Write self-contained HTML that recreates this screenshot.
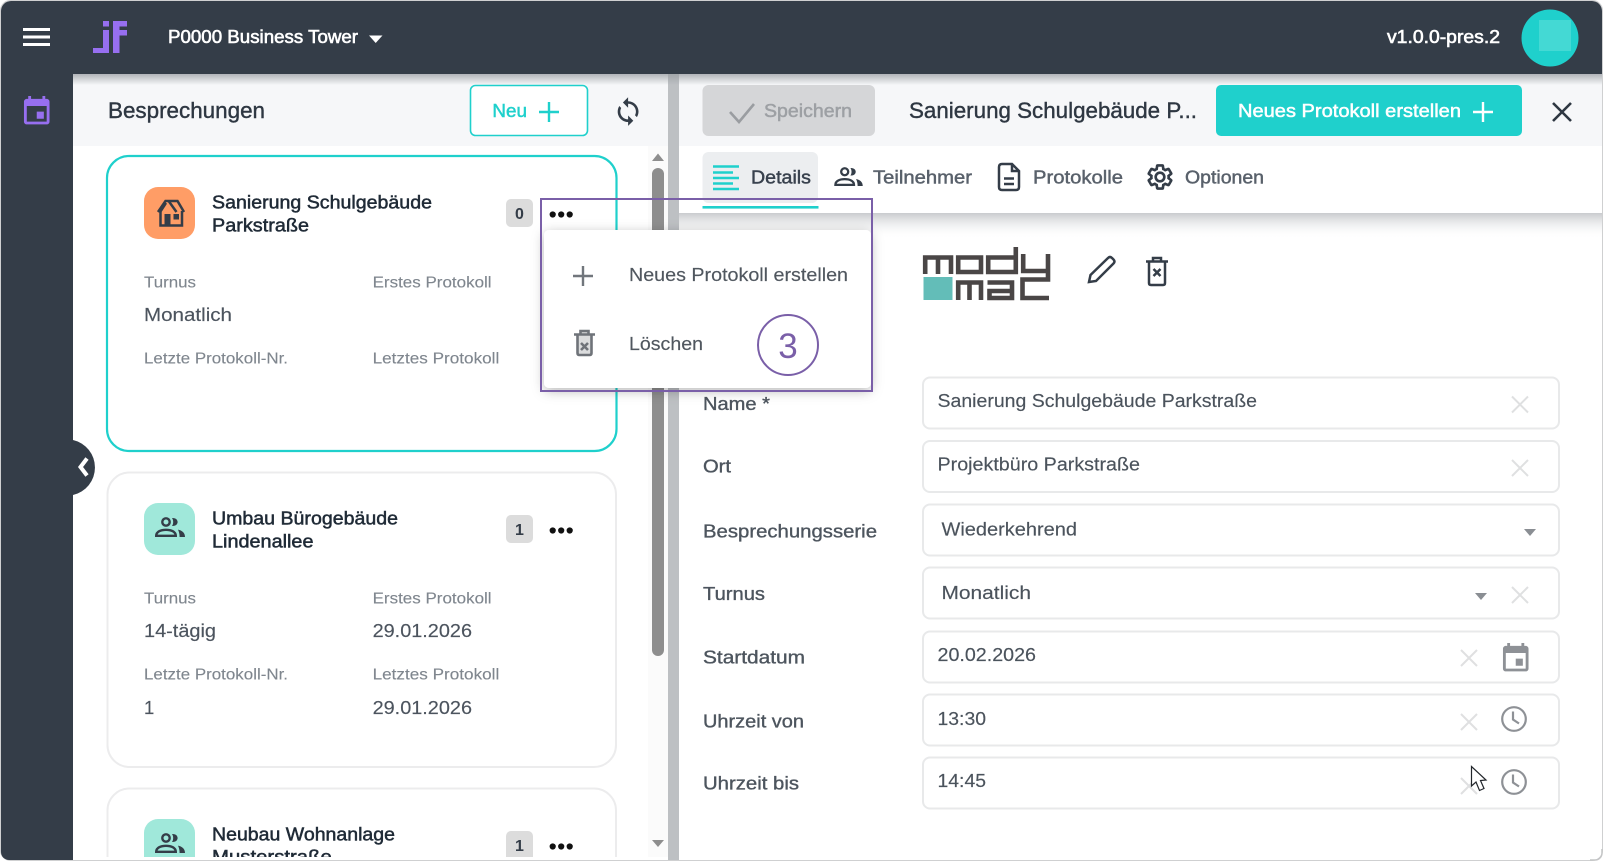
<!DOCTYPE html>
<html lang="de"><head><meta charset="utf-8"><title>Besprechungen</title>
<style>
html,body{margin:0;padding:0;background:#fff;width:1610px;height:862px;overflow:hidden}
body{position:relative}
svg{display:block}
text{font-family:"Liberation Sans",Arial,sans-serif}
.top{font-size:18px;fill:#fff;stroke:#fff;stroke-width:.6px}
.h{font-size:22.5px;fill:#2e3742;stroke:#2e3742;stroke-width:.4px}
.ct{font-size:18.5px;fill:#1f2a36;stroke:#1f2a36;stroke-width:.5px}
.lb{font-size:15.5px;fill:#7f868e;stroke:#7f868e;stroke-width:.12px}
.val{font-size:18.5px;fill:#4c545e;stroke:#4c545e;stroke-width:.15px}
.badge{font-size:16px;font-weight:700;fill:#343d48;text-anchor:middle}
.tab{font-size:18.5px;fill:#59616b;stroke:#59616b;stroke-width:.45px}
.menu{font-size:18.5px;fill:#50575f;stroke:#50575f;stroke-width:.15px}
.fl{font-size:18px;fill:#4d555e;stroke:#4d555e;stroke-width:.35px}
.fv{font-size:18px;fill:#4b535c;stroke:#4b535c;stroke-width:.15px}
.fld{fill:#fff;stroke:#e8e9ea;stroke-width:2}
.x{stroke:#dfe0e1;stroke-width:2;fill:none}
.dark{fill:none;stroke:#343d48;stroke-width:2.5}
.clipline{position:absolute;left:212px;top:848px;width:130px;height:9px;overflow:hidden}
.clipline div{position:absolute;left:0;top:9px;height:0;line-height:0;white-space:nowrap;font:18.5px/0 "Liberation Sans",Arial,sans-serif;color:#1f2a36;-webkit-text-stroke:.5px #1f2a36;transform:scaleX(1.1);transform-origin:left center}
</style></head><body>
<svg width="1610" height="862" viewBox="0 0 1610 862" xmlns="http://www.w3.org/2000/svg">
<defs>
<linearGradient id="sh1" x1="0" y1="0" x2="0" y2="1"><stop offset="0" stop-color="#9a9ea3" stop-opacity=".75"/><stop offset="1" stop-color="#9a9ea3" stop-opacity="0"/></linearGradient>
<linearGradient id="sh2" x1="0" y1="0" x2="0" y2="1"><stop offset="0" stop-color="#c9cbce"/><stop offset="1" stop-color="#fff" stop-opacity="0"/></linearGradient>
<filter id="pop" x="-10%" y="-15%" width="120%" height="130%"><feDropShadow dx="0" dy="3" stdDeviation="6" flood-color="#000" flood-opacity=".28"/></filter>
<symbol id="people" viewBox="0 0 30 20" overflow="visible">
<circle cx="11" cy="5" r="3.7" fill="none" stroke="#343d48" stroke-width="2.4"/>
<path d="M17 1C21 .8 22.6 3 22.6 5C22.6 7 21 9.2 17 9C18.6 7 18.6 3 17 1Z" fill="#343d48"/>
<path d="M1.2 18.8C1.2 14.6 6 12.8 11 12.8C16 12.8 20.8 14.6 20.8 18.8Z" fill="none" stroke="#343d48" stroke-width="2.4"/>
<path d="M23 12.6C27 13.5 30 15.6 30 20H24.6C24.6 17 24 14.8 23 12.6Z" fill="#343d48"/>
</symbol>
<symbol id="house" viewBox="0 0 28 28" overflow="visible">
<path d="M1 13L8.5 2H20.5L27 13M3.5 12V26.5H25V12M12 2.5L19.5 13M3.5 12.5L9 4" fill="none" stroke="#343d48" stroke-width="2.5"/>
<rect x="7.5" y="15" width="6" height="11" fill="#343d48"/><rect x="16.5" y="15" width="5.5" height="5.5" fill="#343d48"/>
</symbol>
</defs>

<!-- frame -->
<rect x=".5" y=".5" width="1602" height="860" rx="10" fill="#fff" stroke="#cfd0d1"/>

<!-- left panel header -->
<rect x="73" y="74" width="595" height="72" fill="#f6f7f9"/>
<!-- right panel header -->
<rect x="679" y="74" width="923" height="72" fill="#f6f7f9"/>
<!-- splitter -->
<rect x="668" y="74" width="11" height="786" fill="#bdc0c3"/>
<rect x="648" y="146" width="20" height="711" fill="#fbfbfb"/>
<!-- tab bar shadow -->
<rect x="679" y="213" width="923" height="26" fill="url(#sh2)"/>

<!-- top bar and sidebar -->
<path d="M1 74V11A10 10 0 0 1 11 1H1592A10 10 0 0 1 1602 11V74Z" fill="#343d48"/>
<path d="M1 74H73V860H9A8 8 0 0 1 1 852Z" fill="#343d48"/>
<rect x="73" y="74" width="1529" height="11" fill="url(#sh1)"/>

<path d="M23 29.5H50M23 37H50M23 44.5H50" stroke="#fff" stroke-width="3"/>
<g fill="#976ff0"><rect x="103" y="21" width="6" height="5.500"/><path d="M103 30H109V53H93V48H103Z"/><path d="M113 53V21H127V26.500H119.500V30H127V35.500H119.500V53Z"/></g>
<text class="top" x="168" y="43" textLength="190" lengthAdjust="spacingAndGlyphs">P0000 Business Tower</text>
<path d="M369 35.500H382.500L375.700 43Z" fill="#fff"/>
<text class="top" x="1387" y="43" textLength="113" lengthAdjust="spacingAndGlyphs">v1.0.0-pres.2</text>
<circle cx="1550" cy="38" r="28.500" fill="#1fd0cc"/><rect x="1539" y="20" width="32" height="31" fill="#44d9d4"/>

<path transform="translate(19.700 94.600) scale(1.42)" fill="#976ff0" d="M17 12h-5v5h5v-5zM16 1v2H8V1H6v2H5c-1.11 0-1.99.9-1.99 2L3 19c0 1.1.89 2 2 2h14c1.1 0 2-.9 2-2V5c0-1.1-.9-2-2-2h-1V1h-2zm3 18H5V8h14v11z"/>

<!-- left header -->
<text class="h" x="108" y="118" textLength="157" lengthAdjust="spacingAndGlyphs">Besprechungen</text>
<rect x="470.500" y="85.500" width="117" height="50" rx="5" fill="#fff" stroke="#1fd0cc" stroke-width="1.600"/>
<text x="492.400" y="117" font-size="18.500" fill="#1fd0cc" stroke="#1fd0cc" stroke-width=".5" textLength="34.600" lengthAdjust="spacingAndGlyphs">Neu</text>
<path d="M539 112H559M549 102V122" stroke="#1fd0cc" stroke-width="2.400"/>
<path transform="translate(612.500 96) scale(1.3)" fill="#343d48" d="M12 4V1L8 5l4 4V6c3.31 0 6 2.69 6 6 0 1.01-.25 1.97-.7 2.8l1.46 1.46C19.54 15.03 20 13.57 20 12c0-4.42-3.58-8-8-8zm0 14c-3.31 0-6-2.69-6-6 0-1.01.25-1.97.7-2.8L5.24 7.74C4.46 8.97 4 10.43 4 12c0 4.42 3.58 8 8 8v3l4-4-4-4v3z"/>

<!-- cards -->
<rect x="107" y="156" width="509.500" height="295" rx="22" fill="#fff" stroke="#1fd0cc" stroke-width="2.200"/>
<rect x="144" y="187" width="51" height="52" rx="14" fill="#ff9d66"/>
<use href="#house" x="157" y="199" width="28" height="28"/>
<text class="ct" x="212" y="208.500" textLength="220" lengthAdjust="spacingAndGlyphs">Sanierung Schulgebäude</text>
<text class="ct" x="212" y="231.500" textLength="97" lengthAdjust="spacingAndGlyphs">Parkstraße</text>
<rect x="506" y="199" width="27" height="28" rx="5" fill="#dcdcdc"/><text class="badge" x="519.500" y="219">0</text>
<g fill="#111"><circle cx="552.700" cy="214.500" r="3.100"/><circle cx="561.200" cy="214.500" r="3.100"/><circle cx="569.700" cy="214.500" r="3.100"/></g>
<text class="lb" x="144" y="287.500" textLength="52" lengthAdjust="spacingAndGlyphs">Turnus</text>
<text class="lb" x="372.600" y="287.500" textLength="119" lengthAdjust="spacingAndGlyphs">Erstes Protokoll</text>
<text class="val" x="144" y="321" textLength="88" lengthAdjust="spacingAndGlyphs">Monatlich</text>
<text class="lb" x="144" y="363.500" textLength="144" lengthAdjust="spacingAndGlyphs">Letzte Protokoll-Nr.</text>
<text class="lb" x="372.600" y="363.500" textLength="126.700" lengthAdjust="spacingAndGlyphs">Letztes Protokoll</text>

<rect x="107.500" y="472.500" width="508.500" height="294.500" rx="22" fill="#fff" stroke="#ececed" stroke-width="2"/>
<rect x="144" y="503" width="51" height="52" rx="14" fill="#a0e8da"/>
<use href="#people" x="155" y="517" width="30" height="20"/>
<text class="ct" x="212" y="524.500" textLength="186" lengthAdjust="spacingAndGlyphs">Umbau Bürogebäude</text>
<text class="ct" x="212" y="547.500" textLength="101.500" lengthAdjust="spacingAndGlyphs">Lindenallee</text>
<rect x="506" y="515" width="27" height="28" rx="5" fill="#dcdcdc"/><text class="badge" x="519.500" y="535">1</text>
<g fill="#111"><circle cx="552.700" cy="530.500" r="3.100"/><circle cx="561.200" cy="530.500" r="3.100"/><circle cx="569.700" cy="530.500" r="3.100"/></g>
<text class="lb" x="144" y="603.500" textLength="52" lengthAdjust="spacingAndGlyphs">Turnus</text>
<text class="lb" x="372.600" y="603.500" textLength="119" lengthAdjust="spacingAndGlyphs">Erstes Protokoll</text>
<text class="val" x="144" y="637" textLength="72" lengthAdjust="spacingAndGlyphs">14-tägig</text>
<text class="val" x="372.600" y="637" textLength="99.400" lengthAdjust="spacingAndGlyphs">29.01.2026</text>
<text class="lb" x="144" y="679.500" textLength="144" lengthAdjust="spacingAndGlyphs">Letzte Protokoll-Nr.</text>
<text class="lb" x="372.600" y="679.500" textLength="126.700" lengthAdjust="spacingAndGlyphs">Letztes Protokoll</text>
<text class="val" x="144" y="714">1</text>
<text class="val" x="372.600" y="714" textLength="99.400" lengthAdjust="spacingAndGlyphs">29.01.2026</text>

<path d="M107.500 857V810.500A22 22 0 0 1 129.500 788.500H594A22 22 0 0 1 616 810.500V857" fill="#fff" stroke="#ececed" stroke-width="2"/>
<path d="M144 857V833A14 14 0 0 1 158 819H181A14 14 0 0 1 195 833V857Z" fill="#a0e8da"/>
<use href="#people" x="155" y="833" width="30" height="20"/>
<text class="ct" x="212" y="840.500" textLength="183" lengthAdjust="spacingAndGlyphs">Neubau Wohnanlage</text>
<path d="M506 857V836A5 5 0 0 1 511 831H528A5 5 0 0 1 533 836V857Z" fill="#dcdcdc"/><text class="badge" x="519.500" y="851">1</text>
<g fill="#111"><circle cx="552.700" cy="846.500" r="3.100"/><circle cx="561.200" cy="846.500" r="3.100"/><circle cx="569.700" cy="846.500" r="3.100"/></g>

<!-- scrollbar -->
<path d="M658 153.500L664 161H652Z" fill="#8e8e8e"/>
<rect x="652" y="168" width="12" height="488" rx="6" fill="#8e8e8e"/>
<path d="M652 840H664L658 847Z" fill="#8e8e8e"/>

<!-- collapse -->
<path d="M73 440A28.200 28.200 0 0 1 73 495Z" fill="#343d48"/>
<path d="M87 458.500L80.500 467L87 475.500" fill="none" stroke="#fff" stroke-width="4"/>

<!-- right header -->
<rect x="702.500" y="85" width="172.500" height="51" rx="6" fill="#d5d6d8"/>
<path d="M730 112L739 122L754 104" fill="none" stroke="#9a9da1" stroke-width="2.600"/>
<text x="764" y="117" font-size="18.500" fill="#9da0a4" stroke="#9da0a4" stroke-width=".5" textLength="88" lengthAdjust="spacingAndGlyphs">Speichern</text>
<text class="h" x="909" y="118" textLength="288" lengthAdjust="spacingAndGlyphs">Sanierung Schulgebäude P...</text>
<rect x="1216" y="85" width="306" height="51" rx="5" fill="#1fd0cc"/>
<text x="1238" y="117" font-size="18.500" fill="#fff" stroke="#fff" stroke-width=".5" textLength="223" lengthAdjust="spacingAndGlyphs">Neues Protokoll erstellen</text>
<path d="M1473 112H1493M1483 102V122" stroke="#fff" stroke-width="2.400"/>
<path d="M1553 103L1571 121M1571 103L1553 121" stroke="#2e3742" stroke-width="2.600"/>

<!-- tabs -->
<rect x="702.500" y="152" width="115.500" height="51" rx="6" fill="#eceef0"/>
<rect x="702.500" y="206" width="116" height="2.600" fill="#1fd0cc"/>
<path d="M713 166.500H739M713 172.500H733M713 178H739M713 183.500H733M713 189H739" stroke="#1fd0cc" stroke-width="2.600"/>
<text class="tab" style="fill:#38414d;stroke:#38414d" x="751" y="183.500" textLength="60" lengthAdjust="spacingAndGlyphs">Details</text>
<use href="#people" x="834" y="167" width="29" height="19"/>
<text class="tab" x="873" y="183.500" textLength="99" lengthAdjust="spacingAndGlyphs">Teilnehmer</text>
<path class="dark" d="M1012 164H1002Q999 164 999 167V187Q999 190 1002 190H1016Q1019 190 1019 187V171Z M1012 164V171H1019M1004 178.500H1014M1004 184H1014"/>
<text class="tab" x="1033" y="183.500" textLength="90" lengthAdjust="spacingAndGlyphs">Protokolle</text>
<path transform="translate(1145.600 162.600) scale(1.2)" fill="none" stroke="#343d48" stroke-width="2.200" d="M19.14 12.94c.04-.3.06-.61.06-.94 0-.32-.02-.64-.07-.94l2.03-1.58c.18-.14.23-.41.12-.61l-1.92-3.32c-.12-.22-.37-.29-.59-.22l-2.39.96c-.5-.38-1.03-.7-1.62-.94l-.36-2.54c-.04-.24-.24-.41-.48-.41h-3.84c-.24 0-.43.17-.47.41l-.36 2.54c-.59.24-1.13.57-1.62.94l-2.39-.96c-.22-.08-.47 0-.59.22L2.74 8.87c-.12.21-.08.47.12.61l2.03 1.58c-.05.3-.09.63-.09.94s.02.64.07.94l-2.03 1.58c-.18.14-.23.41-.12.61l1.92 3.32c.12.22.37.29.59.22l2.39-.96c.5.38 1.03.7 1.62.94l.36 2.54c.05.24.24.41.48.41h3.84c.24 0 .44-.17.47-.41l.36-2.54c.59-.24 1.13-.56 1.62-.94l2.39.96c.22.08.47 0 .59-.22l1.92-3.32c.12-.22.07-.47-.12-.61l-2.01-1.58zM12 15.6c-1.98 0-3.6-1.62-3.6-3.6s1.62-3.6 3.6-3.6 3.6 1.62 3.6 3.6-1.62 3.6-3.6 3.6z"/>
<text class="tab" x="1185" y="183.500" textLength="79" lengthAdjust="spacingAndGlyphs">Optionen</text>

<!-- logo -->
<g aria-label="modymac">
<title>mody mac</title>
<g fill="none" stroke="#4a4646" stroke-width="4.600">
<path d="M925.200 274V257.500H951V274M938 257.500V274"/>
<path d="M958.200 257.500H981V272H958.200Z"/>
<path d="M1015.800 247V272H988.200V257.500H1015.800"/>
<path d="M1023.200 254V271H1048M1048 254V279.500H1022.500V298H1049"/>
<path d="M958.200 300V282.500H981V300M969.500 282.500V300"/>
<path d="M987.500 282.500H1012V298H989.500V291H1012"/>
</g>
<rect x="923.500" y="277" width="29" height="23" fill="#63bdb8"/>
</g>
<path class="dark" d="M1089 282L1090.500 275L1108 258Q1110 256 1112 258L1113.500 259.500Q1115.500 261.500 1113.500 263.500L1096 281Z"/>
<path class="dark" d="M1146 261.500H1168M1153 261V258H1161V261M1149 261.500V283Q1149 285 1151 285H1163Q1165 285 1165 283V261.500M1153.500 269L1160.500 276M1160.500 269L1153.500 276"/>

<!-- form -->
<text class="fl" x="703" y="410" textLength="67" lengthAdjust="spacingAndGlyphs">Name *</text>
<text class="fl" x="703" y="472.500" textLength="28" lengthAdjust="spacingAndGlyphs">Ort</text>
<text class="fl" x="703" y="537.500" textLength="174" lengthAdjust="spacingAndGlyphs">Besprechungsserie</text>
<text class="fl" x="703" y="600" textLength="62" lengthAdjust="spacingAndGlyphs">Turnus</text>
<text class="fl" x="703" y="663.500" textLength="102" lengthAdjust="spacingAndGlyphs">Startdatum</text>
<text class="fl" x="703" y="727.500" textLength="101" lengthAdjust="spacingAndGlyphs">Uhrzeit von</text>
<text class="fl" x="703" y="789.500" textLength="96" lengthAdjust="spacingAndGlyphs">Uhrzeit bis</text>

<rect class="fld" x="923" y="377.500" width="636" height="51" rx="7"/>
<rect class="fld" x="923" y="441" width="636" height="51" rx="7"/>
<rect class="fld" x="923" y="504.500" width="636" height="51" rx="7"/>
<rect class="fld" x="923" y="567.500" width="636" height="51" rx="7"/>
<rect class="fld" x="923" y="631.500" width="636" height="51" rx="7"/>
<rect class="fld" x="923" y="694.500" width="636" height="51" rx="7"/>
<rect class="fld" x="923" y="757.500" width="636" height="51" rx="7"/>

<text class="fv" x="937.500" y="407" textLength="319.500" lengthAdjust="spacingAndGlyphs">Sanierung Schulgebäude Parkstraße</text>
<text class="fv" x="937.500" y="470.500" textLength="202.500" lengthAdjust="spacingAndGlyphs">Projektbüro Parkstraße</text>
<text class="fv" x="941.500" y="535.500" textLength="135.500" lengthAdjust="spacingAndGlyphs">Wiederkehrend</text>
<text class="fv" x="941.500" y="599" textLength="89.500" lengthAdjust="spacingAndGlyphs">Monatlich</text>
<text class="fv" x="937.500" y="661" textLength="98.500" lengthAdjust="spacingAndGlyphs">20.02.2026</text>
<text class="fv" x="937.500" y="725" textLength="48.500" lengthAdjust="spacingAndGlyphs">13:30</text>
<text class="fv" x="937.500" y="787" textLength="48.500" lengthAdjust="spacingAndGlyphs">14:45</text>

<path class="x" d="M1512 396.500L1528 412.500M1528 396.500L1512 412.500"/>
<path class="x" d="M1512 460L1528 476M1528 460L1512 476"/>
<path class="x" d="M1512 587L1528 603M1528 587L1512 603"/>
<path class="x" d="M1461 650L1477 666M1477 650L1461 666"/>
<path class="x" d="M1461 714L1477 730M1477 714L1461 730"/>
<path class="x" d="M1461 778L1477 794M1477 778L1461 794"/>
<path d="M1524 529H1536L1530 536Z" fill="#8a8e93"/>
<path d="M1475 593H1487L1481 600Z" fill="#8a8e93"/>
<path transform="translate(1498.700 641.600) scale(1.42)" fill="#8e9196" d="M17 12h-5v5h5v-5zM16 1v2H8V1H6v2H5c-1.11 0-1.99.9-1.99 2L3 19c0 1.1.89 2 2 2h14c1.1 0 2-.9 2-2V5c0-1.1-.9-2-2-2h-1V1h-2zm3 18H5V8h14v11z"/>
<circle cx="1514" cy="719" r="11.800" fill="none" stroke="#8e9196" stroke-width="2.200"/><path d="M1513 711.500V719.500L1519 723.500" fill="none" stroke="#8e9196" stroke-width="2.200"/>
<circle cx="1514" cy="782" r="11.800" fill="none" stroke="#8e9196" stroke-width="2.200"/><path d="M1513 774.500V782.500L1519 786.500" fill="none" stroke="#8e9196" stroke-width="2.200"/>
<path d="M1471.500 766.500V786L1476 782L1479.500 790.500L1484 788.500L1480.500 780.500L1486 780Z" fill="#fff" stroke="#22262b" stroke-width="1.200"/>

<!-- popup menu -->
<rect x="544" y="230" width="327" height="158" rx="5" fill="#fff" filter="url(#pop)"/>
<path d="M573 276H593M583 266V286" stroke="#71767c" stroke-width="2.400"/>
<text class="menu" x="629" y="281" textLength="219" lengthAdjust="spacingAndGlyphs">Neues Protokoll erstellen</text>
<path d="M574 334.500H595M580.500 334V331H588.500V334M577.500 335V353Q577.500 355 579.500 355H589.500Q591.500 355 591.500 353V335M581 343L588 350M588 343L581 350" fill="rgba(110,114,120,.25)" stroke="#6f7379" stroke-width="2.600"/>
<text class="menu" x="629" y="350" textLength="74" lengthAdjust="spacingAndGlyphs">Löschen</text>

<!-- annotation -->
<rect x="541" y="199" width="331" height="192" fill="none" stroke="#7a5fa8" stroke-width="2"/>
<circle cx="788" cy="345" r="30" fill="#fff" stroke="#7a5fa8" stroke-width="2"/>
<text x="788" y="358" font-size="35" fill="#7a5fa8" text-anchor="middle">3</text>

<!-- resize corner -->
<path d="M1602 849V853A7 7 0 0 1 1595 860H1590" fill="none" stroke="#c4c5c6" stroke-width="1.500"/>
</svg>
<div class="clipline"><div>Musterstraße</div></div>
</body></html>
